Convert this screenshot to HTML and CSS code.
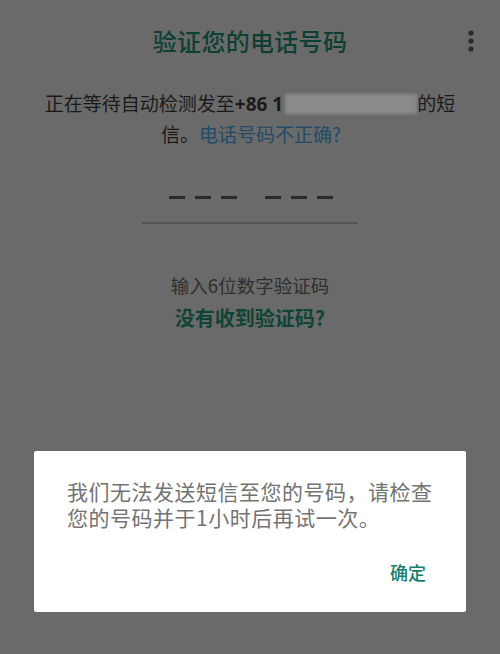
FILE: index.html
```html
<!DOCTYPE html>
<html lang="zh-CN">
<head>
<meta charset="utf-8">
<link rel="stylesheet" href="styles.css">
</head>
<body>
<div class="screen">
  <header class="appbar">
    <div class="side"></div>
    <h1 class="title">验证您的电话号码</h1>
    <div class="side right">
      <svg class="menu" width="8" height="22" viewBox="0 0 8 22"><circle cx="4" cy="3" r="2.6"/><circle cx="4" cy="11" r="2.6"/><circle cx="4" cy="19" r="2.6"/></svg>
    </div>
  </header>

  <div class="desc">
    <div class="line">正在等待自动检测发至<b class="num">+86 1</b><span class="redact"></span>的短</div>
    <div class="line">信。<span class="link">电话号码不正确?</span></div>
  </div>

  <div class="code">
    <div class="dashes">
      <div class="group"><i></i><i></i><i></i></div>
      <div class="group"><i></i><i></i><i></i></div>
    </div>
  </div>

  <p class="hint">输入6位数字验证码</p>
  <p class="resend">没有收到验证码?</p>

  <div class="dialog">
    <p class="msg">我们无法发送短信至您的号码，请检查您的号码并于1小时后再试一次。</p>
    <div class="actions"><span class="btn">确定</span></div>
  </div>
</div>
</body>
</html>
```

FILE: styles.css
```css
html, body {
  margin: 0;
  padding: 0;
}
body {
  background: #6a6a6a;
  font-family: "Noto Sans CJK SC", "Noto Sans", sans-serif;
}
.screen {
  position: relative;
  width: 500px;
  height: 654px;
  overflow: hidden;
}
.appbar {
  height: 82px;
  display: grid;
  grid-template-columns: 1fr auto 1fr;
  align-items: center;
}
.side.right {
  display: flex;
  justify-content: flex-end;
  padding-right: 25px;
}
.menu circle { fill: #2a2a2a; }
.title {
  margin: 0;
  font-size: 24px;
  font-weight: 500;
  line-height: 32px;
  color: #0e3f33;
  letter-spacing: 0.3px;
}
.desc {
  margin-top: 6px;
  text-align: center;
  font-size: 19px;
  line-height: 29px;
  color: #1a1a1a;
}
.line { white-space: nowrap; }
.line + .line { padding-left: 2px; }
.num { font-weight: 700; font-family: "Open Sans", "Noto Sans", sans-serif; }
.redact {
  display: inline-block;
  width: 132px;
  height: 20px;
  vertical-align: -3px;
  background: #8a8a8a;
  filter: blur(1.5px);
  margin-left: 2px;
}
.link { color: #214b66; }
.code {
  width: 214px;
  margin: 48px auto 0;
  height: 26px;
  border-bottom: 2px solid #545454;
  display: flex;
  justify-content: center;
  padding-left: 2px;
}
.dashes {
  display: flex;
  gap: 28px;
}
.group {
  display: flex;
  gap: 10px;
}
.group i {
  display: block;
  width: 16px;
  height: 3px;
  background: #2b2b2b;
}
.hint {
  margin: 48px 0 0;
  text-align: center;
  font-size: 18.5px;
  line-height: 26px;
  color: #2f2f2f;
}
.resend {
  margin: 6px 0 0;
  text-align: center;
  font-size: 20px;
  line-height: 28px;
  font-weight: 700;
  color: #0f4436;
}
.dialog {
  position: absolute;
  left: 34px;
  top: 451px;
  width: 432px;
  height: 161px;
  background: #fff;
  border-radius: 2px;
  box-sizing: border-box;
  padding: 27px 30px 0 33px;
}
.msg {
  margin: 0;
  font-size: 21px;
  line-height: 26px;
  letter-spacing: 0.5px;
  color: #737373;
}
.actions {
  display: flex;
  justify-content: flex-end;
  margin-top: 29px;
  padding-right: 10px;
}
.btn {
  font-size: 18px;
  line-height: 26px;
  font-weight: 500;
  color: #17806d;
}
```
